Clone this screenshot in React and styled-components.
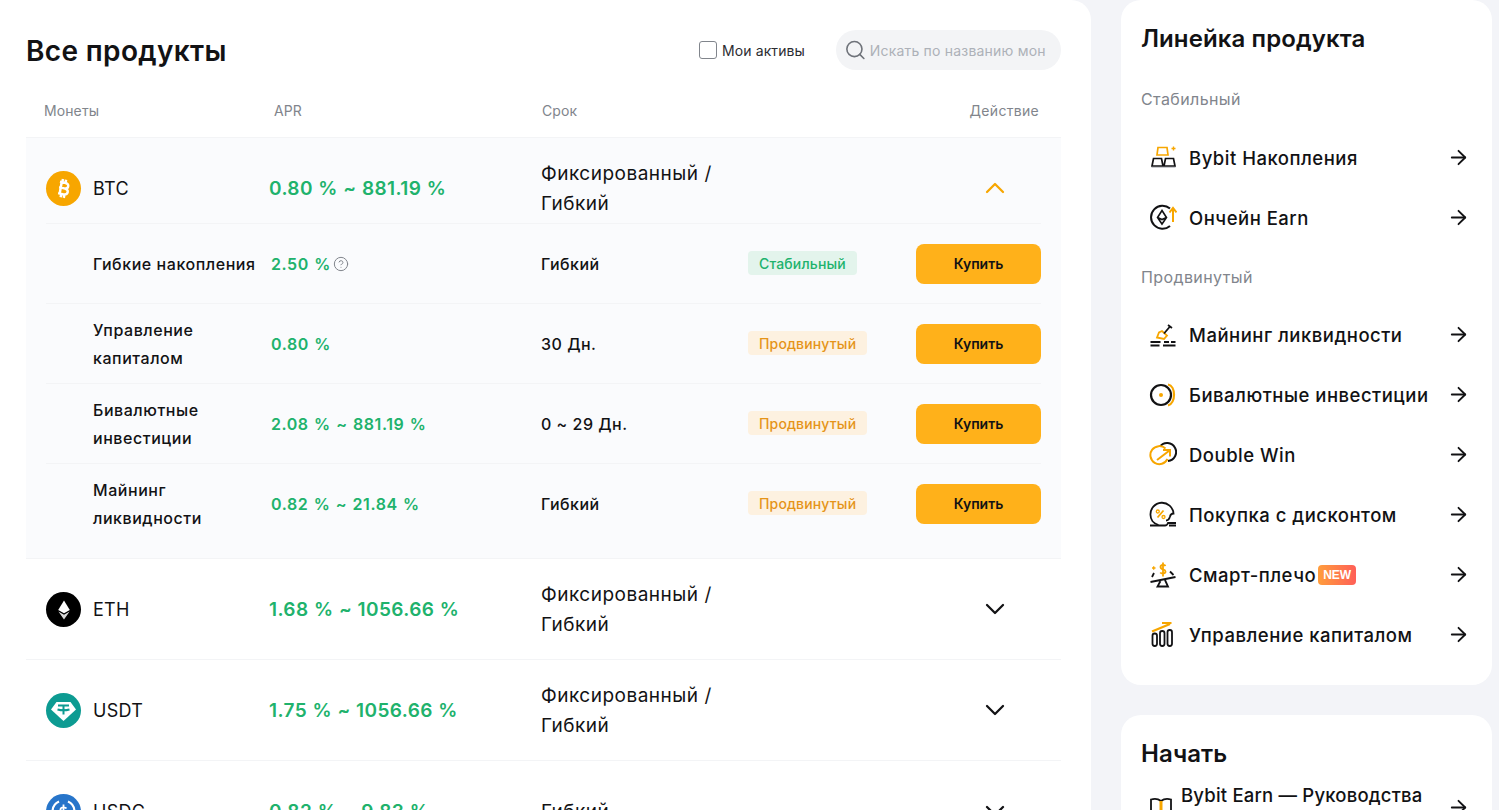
import React from "react";
import styled, { createGlobalStyle } from "styled-components";
import { ChevronUp, ChevronDown, ArrowRight, Search, CircleHelp } from "lucide-react";

const FONT = `"Inter", "Noto Sans", "Liberation Sans", sans-serif`;

const GlobalStyle = createGlobalStyle`
  html, body { margin: 0; padding: 0; height: 810px; overflow: hidden; background: #f3f4f8; }
  body { font-family: ${FONT}; color: #121214; }
  * { box-sizing: border-box; }
`;

const Page = styled.div`
  display: flex;
  align-items: flex-start;
  height: 810px;
  overflow: hidden;
`;

const Main = styled.main`
  width: 1091px;
  flex-shrink: 0;
  background: #ffffff;
  border-radius: 0 20px 20px 0;
  padding: 0 30px 0 26px;
`;

const TopBar = styled.div`
  display: flex;
  align-items: center;
  height: 85px;
  padding-top: 15px;
`;

const Title = styled.h1`
  margin: 2px 0 0;
  font-size: 28px;
  line-height: 36px;
  font-weight: 600;
  letter-spacing: 0.35px;
  flex: 1;
`;

const Check = styled.label`
  display: flex;
  align-items: center;
  gap: 5px;
  font-size: 14px;
  letter-spacing: 0.1px;
  color: #2b2c31;
  margin-right: 31px;
`;

const CheckBox = styled.span`
  width: 18px;
  height: 18px;
  border: 1px solid #81858c;
  border-radius: 3px;
  background: #fff;
`;

const SearchBox = styled.div`
  width: 225px;
  height: 40px;
  border-radius: 20px;
  background: #f3f4f6;
  display: flex;
  align-items: center;
  padding: 0 15px 0 8px;
  gap: 3px;
  color: #6f737a;
  overflow: hidden;
`;

const Placeholder = styled.span`
  font-size: 14px;
  letter-spacing: 0.2px;
  color: #adb1b8;
  white-space: nowrap;
  overflow: hidden;
`;

const HeadRow = styled.div`
  display: grid;
  grid-template-columns: 230px 268px 1fr 100px;
  align-items: center;
  height: 53px;
  padding: 0 22px 2px 18px;
  font-size: 14px;
  letter-spacing: 0.1px;
  color: #81858c;
  border-bottom: 1px solid #f3f4f6;
`;

const HeadLast = styled.span`
  text-align: right;
  letter-spacing: 0.3px;
`;

const CoinBlock = styled.div`
  background: ${({ open }) => (open ? "#fafbfd" : "#ffffff")};
  border-bottom: 1px solid #f3f4f6;
  padding: 0 20px;
`;

const CoinRow = styled.div`
  display: grid;
  grid-template-columns: 223px 272px 1fr 92px;
  align-items: center;
  height: ${({ open }) => (open ? "85px" : "100px")};
  padding-top: ${({ open }) => (open ? "16px" : "1px")};
`;

const CoinName = styled.div`
  display: flex;
  align-items: center;
  gap: 12px;
  font-size: 18px;
  letter-spacing: 0.3px;
`;

const CoinIcon = styled.span`
  width: 35px;
  height: 35px;
  border-radius: 50%;
  background: ${({ bg }) => bg};
  display: flex;
  align-items: center;
  justify-content: center;
  flex-shrink: 0;
  overflow: hidden;
`;

const CoinApr = styled.div`
  font-size: 19px;
  font-weight: 600;
  letter-spacing: 0.4px;
  word-spacing: 0.3px;
  color: #20b26c;
`;

const Term = styled.div`
  font-size: 19px;
  letter-spacing: 0.5px;
  line-height: 30px;
  width: 190px;
`;

const Toggle = styled.div`
  display: flex;
  justify-content: center;
  margin-bottom: 2px;
  color: ${({ open }) => (open ? "#f7a600" : "#121214")};
`;

const SubList = styled.div`
  padding-bottom: 14px;
  border-top: 1px solid #f3f4f6;
`;

const SubRow = styled.div`
  display: grid;
  grid-template-columns: 178px 270px 207px 1fr 125px;
  align-items: center;
  height: 80px;
  padding-left: 47px;
  border-bottom: 1px solid ${({ last }) => (last ? "transparent" : "#f3f4f6")};
`;

const SubName = styled.div`
  max-width: 170px;
  font-size: 16px;
  letter-spacing: 0.55px;
  line-height: 28px;
  font-weight: 500;
`;

const SubApr = styled.div`
  display: flex;
  align-items: center;
  gap: 2px;
  font-size: 16px;
  font-weight: 600;
  letter-spacing: 0.55px;
  word-spacing: 0.9px;
  color: #20b26c;
`;

const HelpMark = styled.span`
  display: flex;
  color: #81858c;
`;

const SubTerm = styled.div`
  font-size: 16px;
  letter-spacing: 0.5px;
  font-weight: 500;
`;

const Tag = styled.span`
  justify-self: start;
  height: 24px;
  margin-bottom: 1px;
  line-height: 25px;
  padding: 0 11px;
  border-radius: 4px;
  font-size: 14px;
  letter-spacing: 0.15px;
  font-weight: 500;
  color: ${({ kind }) => (kind === "stable" ? "#20b26c" : "#e59419")};
  background: ${({ kind }) => (kind === "stable" ? "#e3f4ec" : "#fdf1e0")};
`;

const BuyButton = styled.button`
  width: 125px;
  height: 40px;
  border: none;
  border-radius: 8px;
  background: #ffb11a;
  font-family: ${FONT};
  font-size: 14px;
  font-weight: 600;
  color: #121214;
`;

const Side = styled.aside`
  width: 371px;
  margin-left: 30px;
  flex-shrink: 0;
  display: flex;
  flex-direction: column;
  gap: 30px;
`;

const SideCard = styled.section`
  background: #ffffff;
  border-radius: 20px;
  padding: 21px 20px 20px;
`;

const SideTitle = styled.h2`
  margin: 0;
  font-size: 24px;
  line-height: 36px;
  font-weight: 600;
  letter-spacing: 0.1px;
`;

const GroupLabel = styled.div`
  font-size: 16px;
  letter-spacing: 0.4px;
  line-height: 24px;
  color: #81858c;
  margin: ${({ first }) => (first ? "30px 0 17px" : "17px 0 16px")};
`;

const Product = styled.div`
  display: flex;
  align-items: center;
  height: 60px;
  margin-top: ${({ guide }) => (guide ? "6px" : "0")};
  padding-left: 8px;
  padding-right: 2px;
  font-size: 18.5px;
  letter-spacing: ${({ guide }) => (guide ? "0.2px" : "0.5px")};
  font-weight: 500;
`;

const ProductIcon = styled.span`
  width: ${({ guide }) => (guide ? "24px" : "28px")};
  height: 28px;
  margin-right: ${({ guide }) => (guide ? "8px" : "12px")};
  flex-shrink: 0;
  display: flex;
`;

const ProductName = styled.span`
  flex: 1;
  display: flex;
  align-items: center;
  gap: 2px;
  line-height: 26px;
`;

const ProductArrow = styled(ArrowRight)`
  margin-bottom: 2px;
  flex-shrink: 0;
`;

const NewBadge = styled.span`
  height: 20px;
  padding: 0 5px;
  line-height: 20px;
  letter-spacing: 0;
  border-radius: 4px;
  background: linear-gradient(90deg, #ff9d3c, #ff5f57);
  color: #fff;
  font-family: "Liberation Sans", sans-serif;
  font-size: 12px;
  font-weight: 700;
`;

const Btc = () => (
  <svg width="25" height="25" viewBox="0 0 20 20" fill="none" stroke="#fff" strokeWidth="2">
    <path d="M7.2 4.500l3.900.9c2.300.5 3 1.700 2.600 3.100-.4 1.400-1.600 1.800-3.200 1.400l-4-1M10.500 9.900c2.200.5 3.300 1.600 2.800 3.200-.5 1.600-1.800 2-4 1.500l-3.600-.9M8.600 4.800L6.900 14.200M9.600 2.400l-.5 2.300M12.100 3l-.5 2.300M8.200 14.600l-.5 2.400M10.700 15.200l-.5 2.300" />
  </svg>
);

const Eth = () => (
  <svg width="18" height="20" viewBox="0 0 18 20" fill="#fff">
    <path d="M9 0.500L3.200 10 9 13.200 14.800 10z" />
    <path d="M3.400 11.600L9 19.500l5.600-7.900L9 14.800z" opacity=".85" />
  </svg>
);

const Usdt = () => (
  <svg width="27" height="24" viewBox="0 0 27 24">
    <path d="M6.500 3h14L26 10.500 13.500 22 1 10.500z" fill="#fff" />
    <path d="M8 6.500h11M13.500 6.500v9M7.500 10.500c3.600 1 8.400 1 12 0" fill="none" stroke="#0d9b92" strokeWidth="2" />
  </svg>
);

const Usdc = () => (
  <svg width="29" height="29" viewBox="0 0 29 29" fill="none" stroke="#fff" strokeWidth="2.200">
    <path d="M10 4.500a11 11 0 000 20M19 4.500a11 11 0 010 20" />
    <path d="M17.500 11.500c-.7-1.200-5.500-2-6 .7-.5 2.800 6.500 1.800 6 4.600-.5 2.600-5.300 1.900-6 .7M14.500 7.500v14" strokeWidth="1.800" />
  </svg>
);

const SavingsIcon = () => (
  <svg width="28" height="28" viewBox="0 0 28 28" fill="none" strokeWidth="1.700">
    <path d="M9 3.500h9l1 7.500H8z" stroke="#f7a600" />
    <path d="M22.500 4.500h4M24.500 2.500v4" stroke="#f7a600" strokeWidth="1.400" />
    <path d="M4.500 14.500h8l1.500 7.500H3zM16.500 14.500h8L26 22H15z" stroke="#121214" />
    <path d="M2.500 23.500h24" stroke="#c9cbd0" strokeWidth="1" />
  </svg>
);

const OnchainIcon = () => (
  <svg width="28" height="28" viewBox="0 0 28 28" fill="none" strokeWidth="2">
    <path d="M21 4.500A11.500 11.500 0 1021 22" stroke="#121214" />
    <path d="M13 6.500l4.500 7-4.500 6.500-4.500-6.500zM8.500 13.500l4.500 2 4.500-2" stroke="#121214" strokeWidth="1.600" />
    <path d="M24 18V4.500M20.500 8.500L24 4l3.500 4.500" stroke="#f7a600" strokeWidth="2" />
  </svg>
);

const MiningIcon = () => (
  <svg width="28" height="28" viewBox="0 0 28 28" fill="none" strokeWidth="1.800">
    <path d="M8 16.500l2-5 3-1.500 5 4.500-3 3.500z" stroke="#f7a600" />
    <path d="M15 12.500l6-7M19 4l4 3" stroke="#121214" />
    <path d="M1.500 21h10M15 21h5M1.500 24.500h9M14 24.500h12.500M22 21h4.500" stroke="#121214" />
  </svg>
);

const DualIcon = () => (
  <svg width="28" height="28" viewBox="0 0 28 28" fill="none">
    <path d="M19 3.500c8 1.500 8 19 0 21" stroke="#f7a600" strokeWidth="2.200" />
    <circle cx="12" cy="14" r="10" stroke="#121214" strokeWidth="2.200" fill="#fff" />
    <circle cx="12" cy="14" r="2" fill="#f7a600" />
  </svg>
);

const DoubleWinIcon = () => (
  <svg width="28" height="28" viewBox="0 0 28 28" fill="none" strokeWidth="2">
    <path d="M11 5.500A9 9 0 1119 20" stroke="#121214" />
    <path d="M16.500 7.500A9 9 0 1018.500 18" stroke="#f7a600" />
    <path d="M8 19L20.500 9.500M14 9h7v6.500" stroke="#f7a600" />
  </svg>
);

const DiscountIcon = () => (
  <svg width="28" height="28" viewBox="0 0 28 28" fill="none" strokeWidth="1.800">
    <path d="M9.500 24C4 22.500 1.500 18 1.500 14a11.500 11.500 0 0123-1.500c-2.500 0-3 1-3.500 3-.7 2.500-1.500 4-4 4" stroke="#121214" />
    <path d="M1 24.500h15c2 0 2.500-1 3-2.500h8M20 24.500h7" stroke="#121214" />
    <path d="M8.500 16.500l6-7" stroke="#f7a600" />
    <circle cx="8.800" cy="10.500" r="1.500" stroke="#f7a600" strokeWidth="1.300" />
    <circle cx="14.500" cy="16" r="1.500" stroke="#f7a600" strokeWidth="1.300" />
  </svg>
);

const SmartIcon = () => (
  <svg width="28" height="28" viewBox="0 0 28 28" fill="none" strokeWidth="1.800">
    <path d="M16.500 5c-1-1.500-5-1.500-5 1 0 3 5 1.800 5 4.500 0 2.500-4 2.500-5.300 1M14 1.500v14" stroke="#f7a600" />
    <path d="M3 7h3.500M4.700 5.200v3.600" stroke="#f7a600" strokeWidth="1.300" />
    <path d="M1.500 21l25-5M11.500 20l-3 5.500h10.500l-3-6.500" stroke="#121214" />
    <path d="M5 12l-2 4M21 10.500l3.500 3.500" stroke="#121214" />
  </svg>
);

const WealthIcon = () => (
  <svg width="28" height="28" viewBox="0 0 28 28" fill="none" strokeWidth="1.800">
    <path d="M3 10.500L21 3" stroke="#f7a600" strokeWidth="2.400" />
    <path d="M13 2h9.500" stroke="#f7a600" strokeWidth="2" />
    <rect x="3.500" y="12.500" width="4.500" height="12.500" rx="2.200" stroke="#121214" />
    <rect x="11" y="10" width="4.500" height="15" rx="2.200" stroke="#121214" />
    <rect x="18.500" y="9" width="4.500" height="16" rx="2.200" stroke="#121214" />
  </svg>
);

const GuideIcon = () => (
  <svg width="24" height="28" viewBox="0 0 24 28" fill="none" strokeWidth="1.800">
    <path d="M12 7C9.500 5 5 4.500 2 5.500v16c3-1 7.500-.5 10 1.500 2.500-2 7-2.500 10-1.500v-16C19 4.500 14.500 5 12 7z" stroke="#121214" />
    <path d="M12 7v9" stroke="#f7a600" strokeWidth="3" />
  </svg>
);

const subRows = [
  { name: "Гибкие накопления", apr: "2.50 %", help: true, term: "Гибкий", tag: "Стабильный", kind: "stable" },
  { name: "Управление капиталом", apr: "0.80 %", term: "30 Дн.", tag: "Продвинутый" },
  { name: "Бивалютные инвестиции", apr: "2.08 % ~ 881.19 %", term: "0 ~ 29 Дн.", tag: "Продвинутый" },
  { name: "Майнинг ликвидности", apr: "0.82 % ~ 21.84 %", term: "Гибкий", tag: "Продвинутый" },
];

const coins = [
  { name: "ETH", apr: "1.68 % ~ 1056.66 %", term: "Фиксированный / Гибкий", bg: "#000000", icon: <Eth /> },
  { name: "USDT", apr: "1.75 % ~ 1056.66 %", term: "Фиксированный / Гибкий", bg: "#0d9b92", icon: <Usdt /> },
  { name: "USDC", apr: "0.82 % ~ 9.83 %", term: "Гибкий", bg: "#2775ca", icon: <Usdc /> },
];

const stableProducts = [
  { name: "Bybit Накопления", icon: <SavingsIcon /> },
  { name: "Ончейн Earn", icon: <OnchainIcon /> },
];

const advancedProducts = [
  { name: "Майнинг ликвидности", icon: <MiningIcon /> },
  { name: "Бивалютные инвестиции", icon: <DualIcon /> },
  { name: "Double Win", icon: <DoubleWinIcon /> },
  { name: "Покупка с дисконтом", icon: <DiscountIcon /> },
  { name: "Смарт-плечо", icon: <SmartIcon />, isNew: true },
  { name: "Управление капиталом", icon: <WealthIcon /> },
];

const ProductLine = ({ item }) => (
  <Product>
    <ProductIcon>{item.icon}</ProductIcon>
    <ProductName>
      {item.name}
      {item.isNew && <NewBadge>NEW</NewBadge>}
    </ProductName>
    <ProductArrow size={23} strokeWidth={1.9} />
  </Product>
);

export default function App() {
  return (
    <>
      <GlobalStyle />
      <Page>
        <Main>
          <TopBar>
            <Title>Все продукты</Title>
            <Check>
              <CheckBox />
              Мои активы
            </Check>
            <SearchBox>
              <Search size={26} strokeWidth={1.7} />
              <Placeholder>Искать по названию монеты</Placeholder>
            </SearchBox>
          </TopBar>
          <HeadRow>
            <span>Монеты</span>
            <span>APR</span>
            <span>Срок</span>
            <HeadLast>Действие</HeadLast>
          </HeadRow>
          <CoinBlock open>
            <CoinRow open>
              <CoinName>
                <CoinIcon bg="#f7a600"><Btc /></CoinIcon>
                BTC
              </CoinName>
              <CoinApr>0.80 % ~ 881.19 %</CoinApr>
              <Term>Фиксированный / Гибкий</Term>
              <Toggle open><ChevronUp size={32} strokeWidth={1.7} /></Toggle>
            </CoinRow>
            <SubList>
              {subRows.map((row, i) => (
                <SubRow key={row.name} last={i === subRows.length - 1}>
                  <SubName>{row.name}</SubName>
                  <SubApr>
                    {row.apr}
                    {row.help && <HelpMark><CircleHelp size={16} strokeWidth={1.5} /></HelpMark>}
                  </SubApr>
                  <SubTerm>{row.term}</SubTerm>
                  <Tag kind={row.kind}>{row.tag}</Tag>
                  <BuyButton>Купить</BuyButton>
                </SubRow>
              ))}
            </SubList>
          </CoinBlock>
          {coins.map((coin) => (
            <CoinBlock key={coin.name}>
              <CoinRow>
                <CoinName>
                  <CoinIcon bg={coin.bg}>{coin.icon}</CoinIcon>
                  {coin.name}
                </CoinName>
                <CoinApr>{coin.apr}</CoinApr>
                <Term>{coin.term}</Term>
                <Toggle><ChevronDown size={32} strokeWidth={1.7} /></Toggle>
              </CoinRow>
            </CoinBlock>
          ))}
        </Main>
        <Side>
          <SideCard>
            <SideTitle>Линейка продукта</SideTitle>
            <GroupLabel first>Стабильный</GroupLabel>
            {stableProducts.map((item) => <ProductLine key={item.name} item={item} />)}
            <GroupLabel>Продвинутый</GroupLabel>
            {advancedProducts.map((item) => <ProductLine key={item.name} item={item} />)}
          </SideCard>
          <SideCard>
            <SideTitle>Начать</SideTitle>
            <Product guide>
              <ProductIcon guide><GuideIcon /></ProductIcon>
              <ProductName>Bybit Earn — Руководства пользователя</ProductName>
              <ProductArrow size={23} strokeWidth={1.9} />
            </Product>
          </SideCard>
        </Side>
      </Page>
    </>
  );
}
